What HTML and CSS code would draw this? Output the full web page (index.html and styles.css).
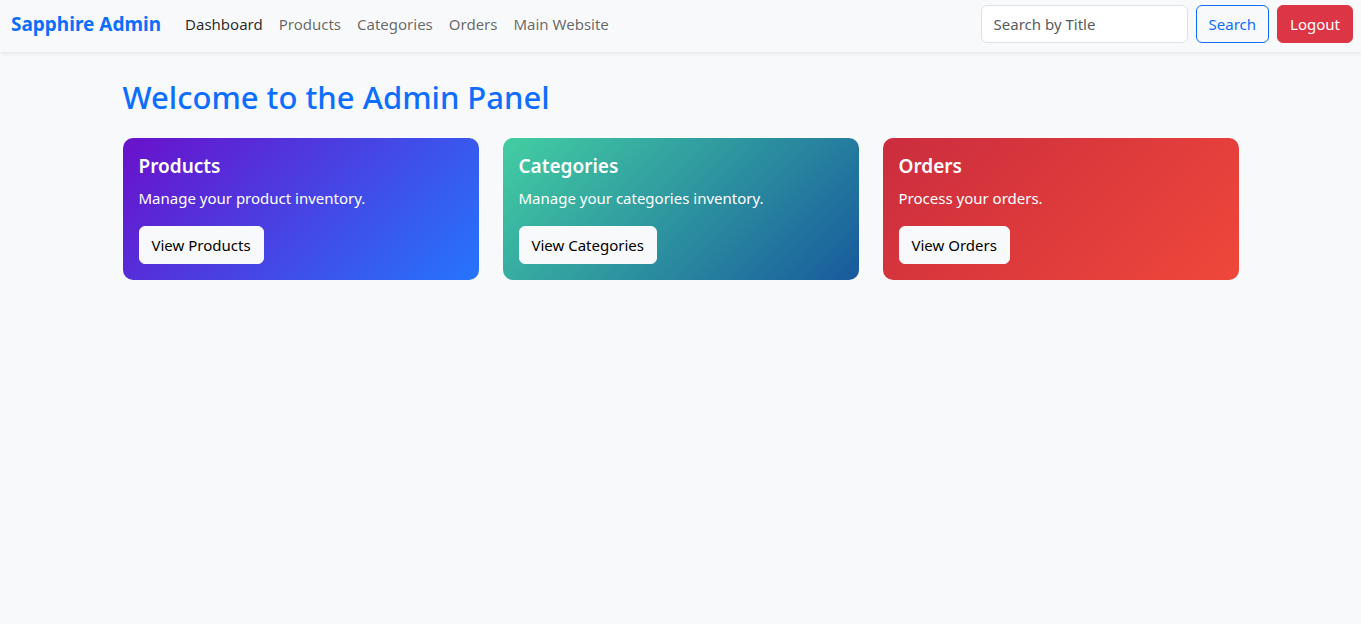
FILE: index.html
```html
<!DOCTYPE html>
<html lang="en">
<head>
<meta charset="utf-8">
<title>Sapphire Admin</title>
<link rel="stylesheet" href="styles.css">
</head>
<body>
<nav class="navbar">
  <div class="nav-left">
    <a class="brand" href="#">Sapphire Admin</a>
    <ul class="nav-links">
      <li><a class="nav-link active" href="#">Dashboard</a></li>
      <li><a class="nav-link" href="#">Products</a></li>
      <li><a class="nav-link" href="#">Categories</a></li>
      <li><a class="nav-link" href="#">Orders</a></li>
      <li><a class="nav-link" href="#">Main Website</a></li>
    </ul>
  </div>
  <div class="nav-right">
    <form class="search-form">
      <input class="search-input" type="search" placeholder="Search by Title">
      <button class="btn btn-outline" type="button">Search</button>
    </form>
    <button class="btn btn-danger" type="button">Logout</button>
  </div>
</nav>
<main class="container">
  <h2 class="title">Welcome to the Admin Panel</h2>
  <div class="cards">
    <div class="card card-products">
      <h5 class="card-title">Products</h5>
      <p class="card-text">Manage your product inventory.</p>
      <a class="btn btn-light" href="#">View Products</a>
    </div>
    <div class="card card-categories">
      <h5 class="card-title">Categories</h5>
      <p class="card-text">Manage your categories inventory.</p>
      <a class="btn btn-light" href="#">View Categories</a>
    </div>
    <div class="card card-orders">
      <h5 class="card-title">Orders</h5>
      <p class="card-text">Process your orders.</p>
      <a class="btn btn-light" href="#">View Orders</a>
    </div>
  </div>
</main>
</body>
</html>
```
FILE: styles.css
```css
* { box-sizing: border-box; }
html, body { margin: 0; padding: 0; }
body {
  font-family: "Noto Sans", "Open Sans", sans-serif;
  font-size: 15px;
  line-height: 24px;
  color: #212529;
  background: #f8f9fa;
  min-height: 100vh;
}
a { text-decoration: none; }
.navbar {
  display: flex;
  justify-content: space-between;
  align-items: center;
  height: 52px;
  padding: 5px 8px 9px 11px;
  background: #f8f9fa;
  box-shadow: 0 2px 4px rgba(0,0,0,0.075);
}
.nav-left { display: flex; align-items: center; }
.brand {
  font-size: 19px;
  font-weight: 700;
  color: #0d6efd;
  margin-right: 16px;
}
.nav-links { display: flex; list-style: none; margin: 0; padding: 0; }
.nav-link {
  display: block;
  padding: 7px 8px;
  color: rgba(0,0,0,0.6);
}
.nav-link.active { color: rgba(0,0,0,0.85); }
.nav-right { display: flex; align-items: center; gap: 8px; }
.search-form { display: flex; gap: 8px; }
.search-input {
  width: 207px;
  height: 38px;
  padding: 6px 12px;
  font: inherit;
  color: #212529;
  background: #fff;
  border: 1px solid #dee2e6;
  border-radius: 6px;
}
.search-input::placeholder { color: #595c5f; }
.btn {
  display: inline-block;
  height: 38px;
  padding: 6px 12px;
  font: inherit;
  line-height: 24px;
  border: 1px solid transparent;
  border-radius: 6px;
  cursor: pointer;
}
.btn-outline { color: #0d6efd; border-color: #0d6efd; background: transparent; }
.btn-danger { color: #fff; background: #dc3545; border-color: #dc3545; }
.btn-light { color: #000; background: #f8f9fa; border-color: #f8f9fa; }
.container {
  max-width: 1140px;
  margin: 0 auto;
  padding: 26px 12px 0;
}
.title {
  margin: 0 0 22px;
  font-size: 31px;
  font-weight: 500;
  line-height: 38px;
  color: #0d6efd;
}
.cards {
  display: grid;
  grid-template-columns: repeat(3, 1fr);
  gap: 24px;
}
.card {
  padding: 16px;
  border-radius: 10px;
  color: #fff;
}
.card-products { background: linear-gradient(135deg, #6a11cb 0%, #2575fc 100%); }
.card-categories { background: linear-gradient(135deg, #43cea2 0%, #185a9d 100%); }
.card-orders { background: linear-gradient(135deg, #cb2d3e 0%, #ef473a 100%); }
.card-title {
  margin: 0 0 8px;
  font-size: 19px;
  font-weight: 600;
  line-height: 24px;
}
.card-text { margin: 0 0 16px; }
```
